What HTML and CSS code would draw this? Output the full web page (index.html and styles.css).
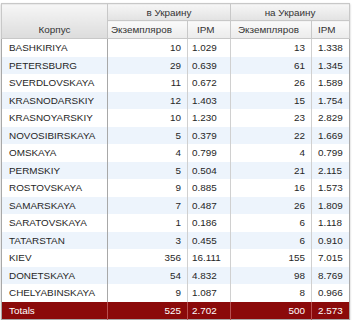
FILE: index.html
```html
<!DOCTYPE html>
<html>
<head>
<meta charset="utf-8">
<link rel="stylesheet" href="styles.css">
</head>
<body>
<div class="wrap">
<table class="grid">
<colgroup>
<col class="c-name"><col class="c-n1"><col class="c-i1"><col class="c-n2"><col class="c-i2">
</colgroup>
<thead>
<tr class="h1">
<th rowspan="2" class="corp">Корпус</th>
<th colspan="2" class="grp">в Украину</th>
<th colspan="2" class="grp">на Украину</th>
</tr>
<tr class="h2">
<th class="sub s1">Экземпляров</th><th class="sub s2">IPM</th>
<th class="sub s3">Экземпляров</th><th class="sub s4">IPM</th>
</tr>
</thead>
<tbody>
<tr><td class="name">BASHKIRIYA</td><td class="num">10</td><td class="ipm">1.029</td><td class="num">13</td><td class="ipm">1.338</td></tr>
<tr class="alt"><td class="name">PETERSBURG</td><td class="num">29</td><td class="ipm">0.639</td><td class="num">61</td><td class="ipm">1.345</td></tr>
<tr><td class="name">SVERDLOVSKAYA</td><td class="num">11</td><td class="ipm">0.672</td><td class="num">26</td><td class="ipm">1.589</td></tr>
<tr class="alt"><td class="name">KRASNODARSKIY</td><td class="num">12</td><td class="ipm">1.403</td><td class="num">15</td><td class="ipm">1.754</td></tr>
<tr><td class="name">KRASNOYARSKIY</td><td class="num">10</td><td class="ipm">1.230</td><td class="num">23</td><td class="ipm">2.829</td></tr>
<tr class="alt"><td class="name">NOVOSIBIRSKAYA</td><td class="num">5</td><td class="ipm">0.379</td><td class="num">22</td><td class="ipm">1.669</td></tr>
<tr><td class="name">OMSKAYA</td><td class="num">4</td><td class="ipm">0.799</td><td class="num">4</td><td class="ipm">0.799</td></tr>
<tr class="alt"><td class="name">PERMSKIY</td><td class="num">5</td><td class="ipm">0.504</td><td class="num">21</td><td class="ipm">2.115</td></tr>
<tr><td class="name">ROSTOVSKAYA</td><td class="num">9</td><td class="ipm">0.885</td><td class="num">16</td><td class="ipm">1.573</td></tr>
<tr class="alt"><td class="name">SAMARSKAYA</td><td class="num">7</td><td class="ipm">0.487</td><td class="num">26</td><td class="ipm">1.809</td></tr>
<tr><td class="name">SARATOVSKAYA</td><td class="num">1</td><td class="ipm">0.186</td><td class="num">6</td><td class="ipm">1.118</td></tr>
<tr class="alt"><td class="name">TATARSTAN</td><td class="num">3</td><td class="ipm">0.455</td><td class="num">6</td><td class="ipm">0.910</td></tr>
<tr><td class="name">KIEV</td><td class="num">356</td><td class="ipm">16.111</td><td class="num">155</td><td class="ipm">7.015</td></tr>
<tr class="alt"><td class="name">DONETSKAYA</td><td class="num">54</td><td class="ipm">4.832</td><td class="num">98</td><td class="ipm">8.769</td></tr>
<tr><td class="name">CHELYABINSKAYA</td><td class="num">9</td><td class="ipm">1.087</td><td class="num">8</td><td class="ipm">0.966</td></tr>
</tbody>
<tfoot>
<tr class="tot"><td class="name">Totals</td><td class="num">525</td><td class="ipm">2.702</td><td class="num">500</td><td class="ipm">2.573</td></tr>
</tfoot>
</table>
</div>
</body>
</html>
```

FILE: styles.css
```css
html, body {
  margin: 0;
  padding: 0;
  background: #ffffff;
}
.wrap {
  padding: 3px 3px 0 1px;
}
.grid {
  width: 348px;
  border-collapse: collapse;
  table-layout: fixed;
  font-family: "Liberation Sans", Arial, sans-serif;
  font-size: 9.9px;
  color: #262626;
  border: 1px solid #a8a8a8;
  box-shadow: 0 1px 2px rgba(0,0,0,0.25);
}
.c-name { width: 106px; }
.c-n1 { width: 80px; }
.c-i1 { width: 43px; }
.c-n2 { width: 81px; }
.c-i2 { width: 38px; }
th {
  font-weight: normal;
  color: #333333;
  border: 1px solid #c8c8c8;
  padding: 0 3px;
  white-space: nowrap;
  overflow: hidden;
}
.h1 th {
  height: 16px;
  background: linear-gradient(#f6f6f6, #e2e2e2);
}
.h2 th {
  height: 17px;
  background: linear-gradient(#fafafa, #ebebeb);
  text-align: left;
}
.h2 th.s1 { padding-left: 3px; }
.h2 th.s2 { padding-left: 9px; }
.h2 th.s3 { padding-left: 7px; }
.h2 th.s4 { padding-left: 6px; }
th.corp {
  vertical-align: bottom;
  padding-bottom: 3px;
  background: linear-gradient(#f6f6f6, #dcdcdc);
}
td {
  height: 17.5px;
  padding: 0 6px;
  border-left: 1px solid #d0d0d0;
  white-space: nowrap;
}
td.name {
  padding-left: 7px;
  border-left: none;
  border-right: 1px solid #a8a8a8;
}
td.num { text-align: right; }
td.ipm { text-align: left; padding-left: 4px; }
td.ipm:last-child { padding-left: 6px; }
tbody tr.alt td { background: #edf4fc; }
tr.tot td {
  background: #8b0a0a;
  color: #ffffff;
  border-left-color: #b85050;
}
tr.tot td.name { border-right-color: #b85050; }
```
